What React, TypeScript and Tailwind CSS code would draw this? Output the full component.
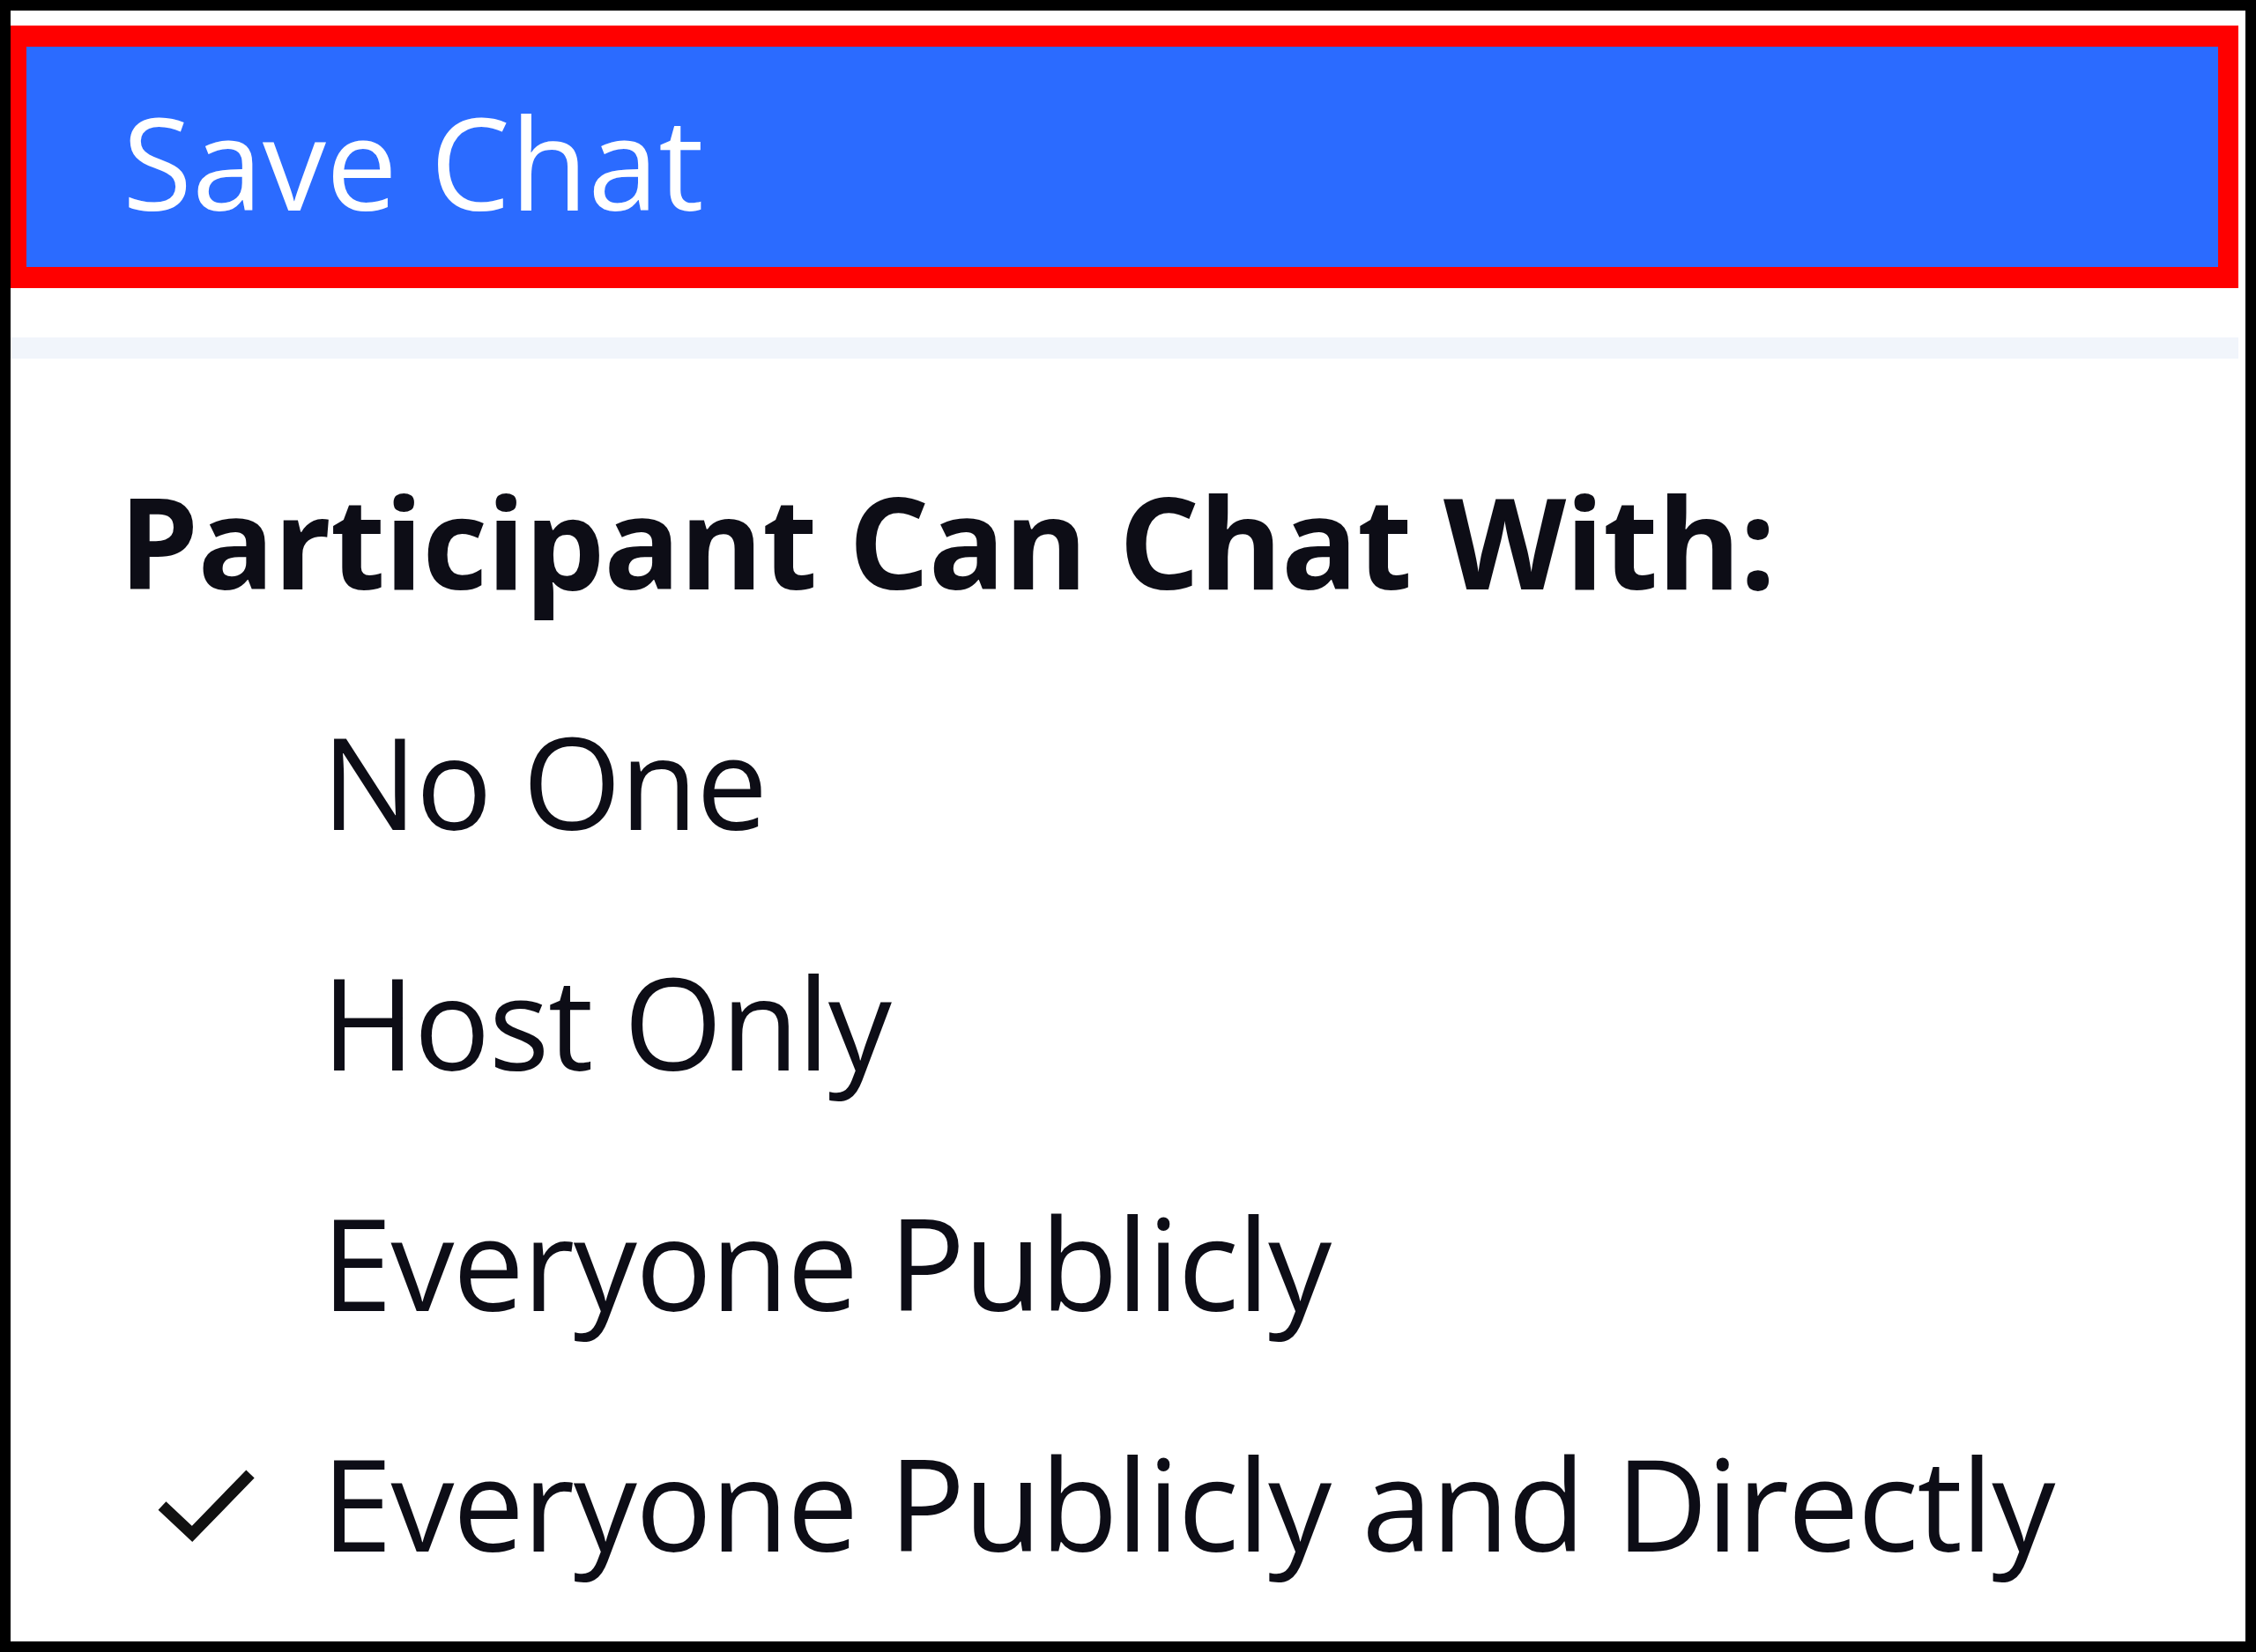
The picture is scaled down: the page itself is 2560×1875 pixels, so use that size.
import { ReactNode } from 'react';

function Option({ label, checked = false }: { label: string; checked?: boolean }) {
  return (
    <div className="flex h-[273px] items-start">
      <div className="w-[353px] shrink-0">
        {checked && (
          <svg className="ml-[158px] mt-[84px]" width="124" height="104" viewBox="0 0 124 104">
            <polyline points="14,56 48,88 114,20" fill="none" stroke="#111" strokeWidth="13" />
          </svg>
        )}
      </div>
      <span className="leading-[273px] whitespace-nowrap tracking-[-1.5px]">{label}</span>
    </div>
  );
}

function Section({ children }: { children: ReactNode }) {
  return <div className="flex flex-col">{children}</div>;
}

export default function App() {
  return (
    <div className="w-[2560px] h-[1875px] border-[12px] border-black bg-white overflow-hidden font-['Open_Sans',sans-serif] text-[144px] text-[#0d0d16]">
      {/* highlighted menu item */}
      <div className="-ml-[5px] mt-[17px] w-[2533px] border-x-[23px] border-y-[24px] border-[#ff0000]">
        <div className="h-[250px] bg-[#2b6bff] pl-[109px] pt-[10px] leading-[240px] text-white whitespace-nowrap">
          Save Chat
        </div>
      </div>

      <div className="mt-[56px] h-[24px] w-[2528px] bg-[#f1f5fb]" />

      <Section>
        <div className="mt-[70px] h-[273px] pl-[123px] leading-[273px] font-bold whitespace-nowrap tracking-[-1px]">
          Participant Can Chat With:
        </div>
        <Option label="No One" />
        <Option label="Host Only" />
        <Option label="Everyone Publicly" />
        <Option label="Everyone Publicly and Directly" checked />
      </Section>
    </div>
  );
}
